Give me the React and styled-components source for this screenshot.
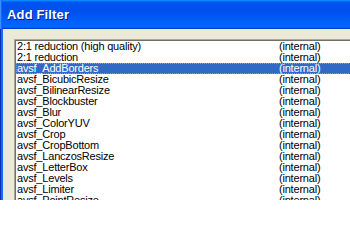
import React from "react";
import styled, { createGlobalStyle } from "styled-components";

const GlobalStyle = createGlobalStyle`
  html, body {
    margin: 0;
    padding: 0;
    width: 350px;
    height: 200px;
    overflow: hidden;
    background: #ffffff;
  }
`;

const Window = styled.div`
  width: 350px;
  height: 200px;
  display: flex;
  flex-direction: column;
  overflow: hidden;
  background: #ece9d8;
`;

const TitleBar = styled.div`
  height: 29px;
  flex: none;
  display: flex;
  align-items: center;
  padding-left: 7px;
  padding-bottom: 1px;
  box-sizing: border-box;
  background: linear-gradient(
    180deg,
    #0997ff,
    #0053ee 8%,
    #0050ee 40%,
    #0066ff 88%,
    #0066ff 93%,
    #005bff 95%,
    #003dd7 96%,
    #003dd7
  );
  box-shadow: inset 1px 0 #3c8cff, inset 2px 0 #166aee;
`;

const Title = styled.span`
  font-family: "Liberation Sans", Arial, sans-serif;
  font-weight: bold;
  font-size: 13px;
  letter-spacing: 0.15px;
  color: #fff;
  text-shadow: 1px 1px #0a1883;
`;

const Body = styled.div`
  flex: 1;
  display: flex;
  min-height: 0;
  padding: 10px 0 0 14px;
  background: linear-gradient(
    to right,
    #0a2eb5 0 1px,
    #166aee 1px 3px,
    #ece9d8 3px
  );
`;

const ListBox = styled.div`
  flex: 1;
  margin-right: -20px;
  margin-bottom: -40px;
  background: #fff;
  border: 1px solid;
  border-color: #aca899 #fff #fff #aca899;
  box-shadow: inset 1px 1px #716f64;
  padding: 1px 0 0 1px;
  overflow: hidden;
  font-family: "Liberation Sans", Arial, sans-serif;
  font-size: 11px;
  letter-spacing: -0.2px;
  color: #000;
`;

const Row = styled.div`
  position: relative;
  display: grid;
  grid-template-columns: 262px auto;
  height: 11px;
  line-height: 11px;
  padding-left: 1px;
  white-space: nowrap;
  background: ${(p) => (p.$selected ? "#316ac5" : "transparent")};
  color: ${(p) => (p.$selected ? "#fff" : "#000")};

  &::after {
    content: "";
    display: ${(p) => (p.$selected ? "block" : "none")};
    position: absolute;
    inset: 0;
    pointer-events: none;
    background-image:
      linear-gradient(to right, #ce953a 50%, transparent 50%),
      linear-gradient(to right, #ce953a 50%, transparent 50%),
      linear-gradient(to bottom, #ce953a 50%, transparent 50%);
    background-size: 2px 1px, 2px 1px, 1px 2px;
    background-repeat: repeat-x, repeat-x, repeat-y;
    background-position: 0 0, 0 100%, 0 0;
  }
`;

const Cell = styled.span`
  overflow: hidden;
`;

const items = [
  "2:1 reduction (high quality)",
  "2:1 reduction",
  "avsf_AddBorders",
  "avsf_BicubicResize",
  "avsf_BilinearResize",
  "avsf_Blockbuster",
  "avsf_Blur",
  "avsf_ColorYUV",
  "avsf_Crop",
  "avsf_CropBottom",
  "avsf_LanczosResize",
  "avsf_LetterBox",
  "avsf_Levels",
  "avsf_Limiter",
  "avsf_PointResize",
];

export default function App() {
  return (
    <>
      <GlobalStyle />
      <Window>
        <TitleBar>
          <Title>Add Filter</Title>
        </TitleBar>
        <Body>
          <ListBox>
            {items.map((name, i) => (
              <Row key={name} $selected={i === 2}>
                <Cell>{name}</Cell>
                <Cell>(internal)</Cell>
              </Row>
            ))}
          </ListBox>
        </Body>
      </Window>
    </>
  );
}
